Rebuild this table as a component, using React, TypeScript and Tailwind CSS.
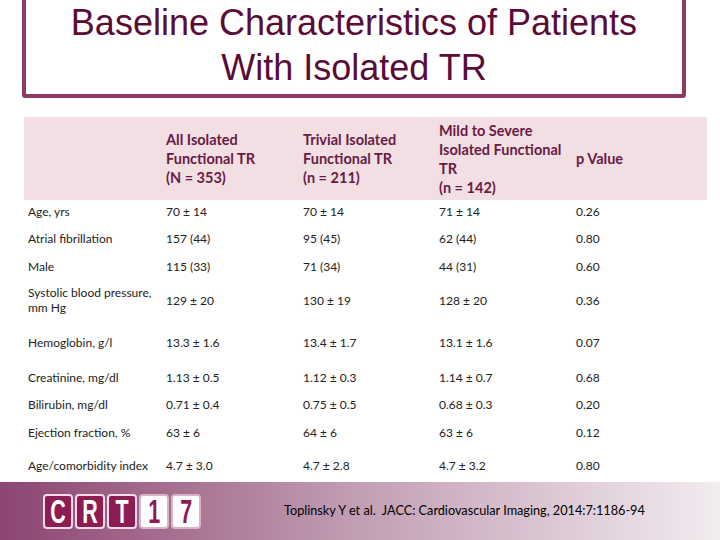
import React from 'react';

type Row = { label: React.ReactNode; all: string; trivial: string; mild: string; p: string; h: string };

const rows: Row[] = [
  { label: 'Age, yrs', all: '70 ± 14', trivial: '70 ± 14', mild: '71 ± 14', p: '0.26', h: 'h-[22px]' },
  { label: 'Atrial fibrillation', all: '157 (44)', trivial: '95 (45)', mild: '62 (44)', p: '0.80', h: 'h-[32px]' },
  { label: 'Male', all: '115 (33)', trivial: '71 (34)', mild: '44 (31)', p: '0.60', h: 'h-[24px]' },
  {
    label: (
      <>
        Systolic blood pressure,
        <br />
        mm Hg
      </>
    ),
    all: '129 ± 20',
    trivial: '130 ± 19',
    mild: '128 ± 20',
    p: '0.36',
    h: 'h-[44px]',
  },
  { label: 'Hemoglobin, g/l', all: '13.3 ± 1.6', trivial: '13.4 ± 1.7', mild: '13.1 ± 1.6', p: '0.07', h: 'h-[40px]' },
  { label: 'Creatinine, mg/dl', all: '1.13 ± 0.5', trivial: '1.12 ± 0.3', mild: '1.14 ± 0.7', p: '0.68', h: 'h-[30px]' },
  { label: 'Bilirubin, mg/dl', all: '0.71 ± 0.4', trivial: '0.75 ± 0.5', mild: '0.68 ± 0.3', p: '0.20', h: 'h-[24px]' },
  { label: 'Ejection fraction, %', all: '63 ± 6', trivial: '64 ± 6', mild: '63 ± 6', p: '0.12', h: 'h-[32px]' },
  { label: 'Age/comorbidity index', all: '4.7 ± 3.0', trivial: '4.7 ± 2.8', mild: '4.7 ± 3.2', p: '0.80', h: 'h-[34px]' },
];

const cols = 'grid grid-cols-[142px_137px_136px_137px_131px]';

function Logo() {
  const dark = 'w-[30px] h-[35px] rounded-[4px] bg-[#8c1c52] border-2 border-[#f2dbe6] text-white';
  const light = 'w-[30px] h-[35px] rounded-[4px] bg-white border-2 border-[#d9b3c7] text-[#8c1c52]';
  return (
    <div className="flex gap-[2px] font-['Liberation_Sans',Arial,sans-serif] font-bold text-[33px] leading-none">
      {['C', 'R', 'T'].map(c => (
        <div key={c} className={`${dark} flex items-center justify-center overflow-hidden`}>
          <span className="inline-block scale-x-[0.65]">{c}</span>
        </div>
      ))}
      {['1', '7'].map(c => (
        <div key={c} className={`${light} flex items-center justify-center overflow-hidden`}>
          <span className="inline-block scale-x-[0.65]">{c}</span>
        </div>
      ))}
    </div>
  );
}

export default function App() {
  return (
    <div className="relative w-[720px] h-[540px] overflow-hidden bg-white font-['Lato','Open_Sans',sans-serif]">
      <div className="ml-[22px] w-[664px] h-[108px] -mt-[10px] border-4 border-[#8e3a64] rounded-b-[3px] flex flex-col items-center pt-[6px] font-['Liberation_Sans',Arial,sans-serif] text-[36px] leading-[45px] text-[#5a0b36]">
        <div>Baseline Characteristics of Patients</div>
        <div>With Isolated TR</div>
      </div>

      <div className="mt-[19px]">
        <div className={`${cols} ml-[24px] w-[683px] h-[83px] items-center bg-[#f1dfe3] text-[14.5px] leading-[19px] font-bold text-[#6b1a45]`}>
          <div />
          <div>
            All Isolated
            <br />
            Functional TR
            <br />
            (N = 353)
          </div>
          <div>
            Trivial Isolated
            <br />
            Functional TR
            <br />
            (n = 211)
          </div>
          <div>
            Mild to Severe
            <br />
            Isolated Functional
            <br />
            TR
            <br />
            (n = 142)
          </div>
          <div>p Value</div>
        </div>

        <div className="ml-[28px] text-[12px] leading-[15px] text-[#222]">
          {rows.map((r, i) => (
            <div key={i} className={`grid grid-cols-[138px_137px_136px_137px_131px] items-center ${r.h}`}>
              <div>{r.label}</div>
              <div>{r.all}</div>
              <div>{r.trivial}</div>
              <div>{r.mild}</div>
              <div>{r.p}</div>
            </div>
          ))}
        </div>
      </div>

      <div className="absolute left-0 bottom-0 w-[720px] h-[58px] flex items-center bg-gradient-to-r from-[#8b4571] via-[#c29fb5] to-[#f2ecf0]">
        <div className="ml-[43px]">
          <Logo />
        </div>
        <div className="ml-[83px] text-[12.7px] text-black font-['Lato','Open_Sans',sans-serif]">
          Toplinsky Y et al.&nbsp; JACC: Cardiovascular Imaging, 2014:7:1186-94
        </div>
      </div>
    </div>
  );
}
